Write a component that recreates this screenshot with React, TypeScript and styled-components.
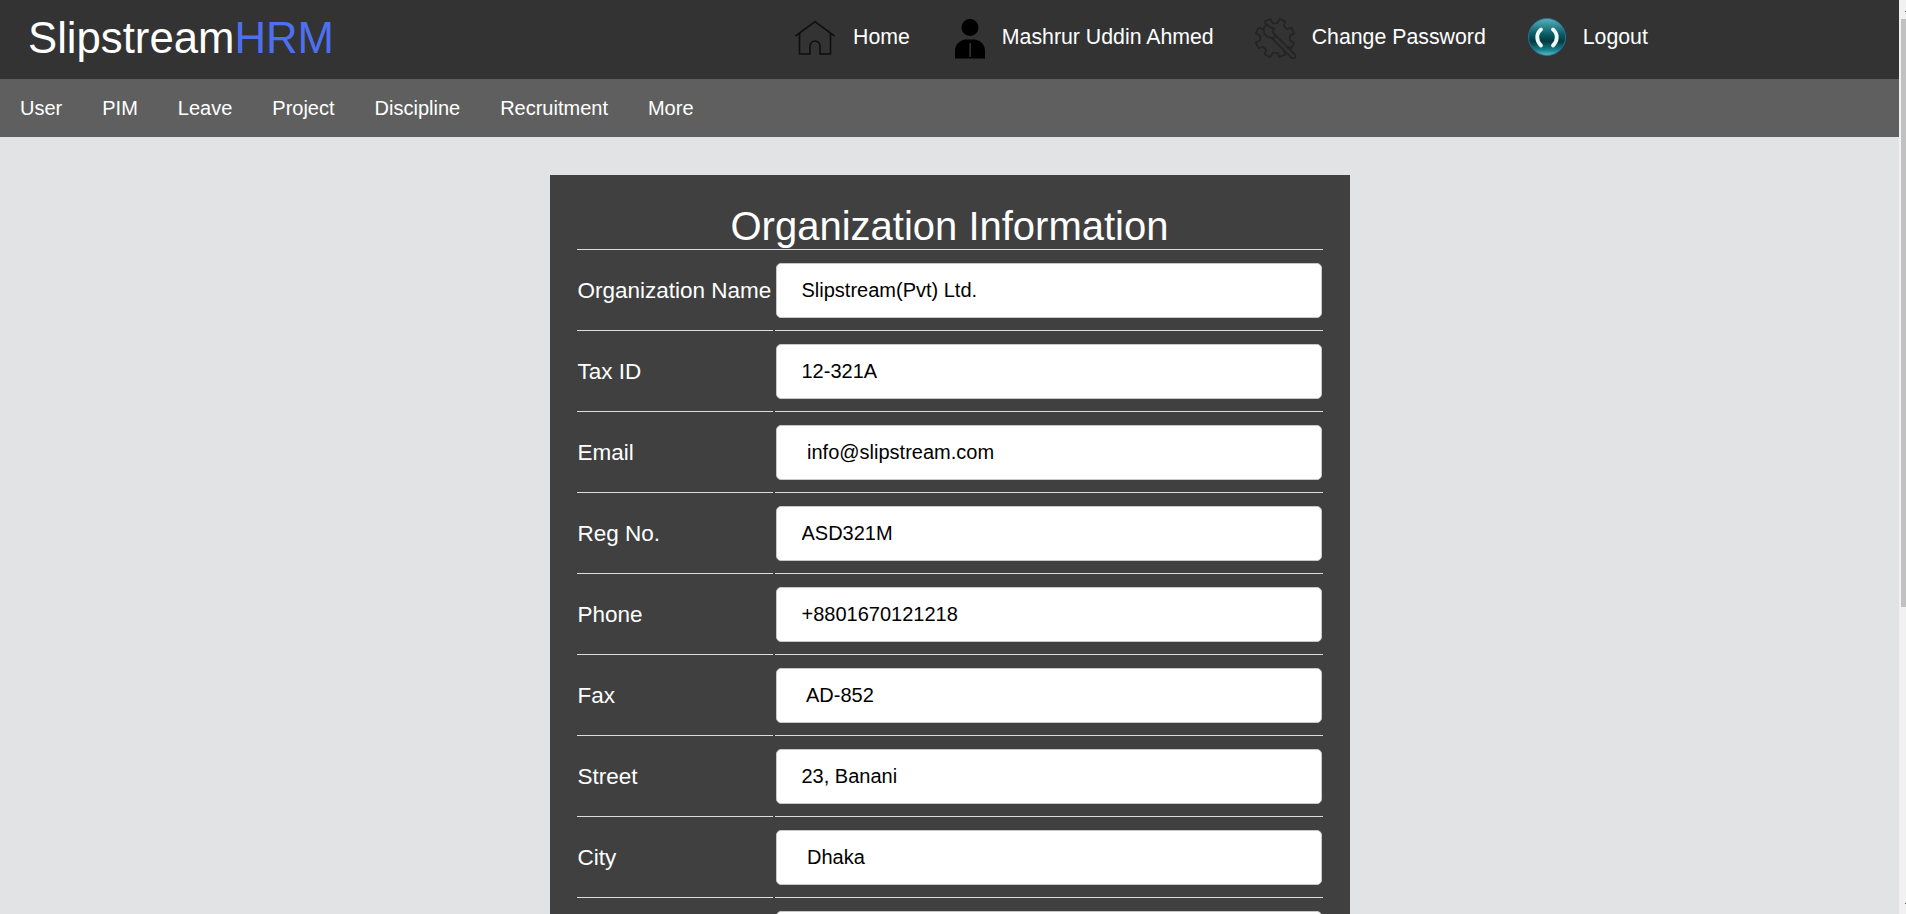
import React from "react";
import styled, { createGlobalStyle } from "styled-components";

const GlobalStyle = createGlobalStyle`
  html, body {
    margin: 0;
    padding: 0;
    height: 100%;
    overflow: hidden;
    background: #e2e3e5;
    font-family: "Liberation Sans", Arial, sans-serif;
  }
`;

const Shell = styled.div`
  display: flex;
  height: 100vh;
`;

const Page = styled.div`
  flex: 1;
  min-width: 0;
  overflow: hidden;
`;

const ScrollRail = styled.div`
  flex: none;
  width: 7px;
  padding: 19px 0 0 2px;
  box-sizing: border-box;
  background-color: #f1f1f1;
  background-image: linear-gradient(#505050, #505050), linear-gradient(#505050, #505050);
  background-repeat: no-repeat;
  background-size: 1px 1px;
  background-position: 6px 11px, 6px 903px;
`;

const ScrollThumb = styled.div`
  height: 588px;
  background: #c1c1c1;
`;

const TopBar = styled.header`
  display: flex;
  align-items: center;
  height: 79px;
  padding-bottom: 5px;
  box-sizing: border-box;
  background: #333333;
  color: #fff;
`;

const Brand = styled.div`
  width: 795px;
  padding: 2px 0 0 28px;
  box-sizing: border-box;
  font-size: 43.7px;
`;

const BrandAccent = styled.span`
  color: #4d70f0;
`;

const TopLinks = styled.nav`
  display: flex;
  align-items: center;
  gap: 37px;
`;

const TopLink = styled.a`
  display: flex;
  align-items: center;
  gap: 16px;
  font-size: 21.3px;
  color: #fff;
`;

const MenuBar = styled.nav`
  display: flex;
  height: 58px;
  background: #5f5f5f;
`;

const MenuItem = styled.a`
  display: flex;
  align-items: center;
  padding: 0 20px;
  font-size: 20px;
  color: #fff;
`;

const Card = styled.form`
  width: 800px;
  margin: 38px auto;
  padding: 28px 27px 0;
  box-sizing: border-box;
  background: #404040;
  color: #fff;
`;

const Title = styled.h1`
  margin: 0;
  height: 46px;
  border-bottom: 1px solid #ddd;
  font-size: 40px;
  font-weight: normal;
  line-height: 46px;
  text-align: center;
`;

const Row = styled.div`
  display: grid;
  grid-template-columns: 196px 548px;
  column-gap: 2px;
`;

const Label = styled.label`
  display: flex;
  align-items: center;
  padding: 2px 0 0 1px;
  border-bottom: 1px solid #ddd;
  font-size: 22.5px;
`;

const Field = styled.div`
  padding: 13px 1px 12px;
  border-bottom: 1px solid #ddd;
`;

const Input = styled.input`
  display: block;
  width: 100%;
  height: 55px;
  padding: 0 25px;
  box-sizing: border-box;
  border: 1px solid #c8c8c8;
  border-radius: 5px;
  background: #fff;
  color: #000;
  font-family: "Liberation Sans", Arial, sans-serif;
  font-size: 20px;
  outline: none;
`;

const Actions = styled.div`
  display: flex;
  justify-content: center;
  align-items: center;
  height: 101px;
`;

const SaveButton = styled.button`
  width: 200px;
  height: 54px;
  border: none;
  border-radius: 5px;
  background: #4d70f0;
  color: #fff;
  font-family: "Liberation Sans", Arial, sans-serif;
  font-size: 20px;
`;

const HomeIcon = () => (
  <svg width="42" height="38" viewBox="0 -2 42 38" fill="none" stroke="#0e0e0e" strokeWidth="1.6">
    <path d="M0.5 16L20 1.7L39.5 16" />
    <path d="M4.5 13V34H15V26a5 5 0 0 1 10 0V34H35.5V13" strokeLinejoin="round" />
  </svg>
);

const PersonIcon = () => (
  <svg width="39" height="44" viewBox="0 -4 39 44">
    <circle cx="23" cy="8.5" r="8.5" fill="#000" />
    <path d="M8 39.5V32C8 25 13 21.5 18 20.5H28C33 21.5 38 25 38 32V39.5Z" fill="#000" />
    <rect x="22.3" y="24" width="1.6" height="14" fill="#333" />
  </svg>
);

// gear outline: flat-topped teeth, open where the wrench handle crosses it
const gearPath = (cx: number, cy: number, inner: number, outer: number, teeth: number): string => {
  const step = (Math.PI * 2) / teeth;
  const parts: string[] = [];
  for (let i = 0; i < teeth; i++) {
    const a = i * step + Math.PI / 8;
    const pts: [number, number][] = [
      [inner, a - step * 0.3],
      [outer, a - step * 0.2],
      [outer, a + step * 0.2],
      [inner, a + step * 0.3],
    ];
    pts.forEach(([r, t], j) => {
      const x = (cx + r * Math.cos(t)).toFixed(1);
      const y = (cy + r * Math.sin(t)).toFixed(1);
      parts.push(`${i === 0 && j === 0 ? "M" : "L"}${x} ${y}`);
    });
  }
  return parts.join(" ") + "Z";
};

const GearIcon = () => (
  <svg width="45" height="44" viewBox="1 0 45 44" fill="none" strokeLinejoin="round">
    <path d={gearPath(25, 23, 15, 19.5, 8)} stroke="#242424" strokeWidth="1.8" />
    <path d="M21 19L43 41" stroke="#242424" strokeWidth="6.5" strokeLinecap="round" />
    <path d="M21 19L43 41" stroke="#333" strokeWidth="3" strokeLinecap="round" />
    <path d="M17 9.5C13.5 11 13 16 15 19.5C18 23 23 24 26 21.5L22.5 17L24 13.5L20 12Z" fill="#333" stroke="#242424" strokeWidth="1.8" />
  </svg>
);

const LogoutIcon = () => (
  <svg width="44" height="38" viewBox="0 -2 44 38">
    <defs>
      <linearGradient id="orb" x1="0" y1="0" x2="0" y2="1">
        <stop offset="0" stopColor="#58b4bd" />
        <stop offset="0.4" stopColor="#0d6069" />
        <stop offset="0.62" stopColor="#033a40" />
        <stop offset="0.85" stopColor="#18808c" />
        <stop offset="1" stopColor="#5cc0c8" />
      </linearGradient>
    </defs>
    <circle cx="24" cy="17" r="18.5" fill="url(#orb)" stroke="#2b6f9a" strokeWidth="1" />
    <path d="M18 9.5C13 13.5 13 21 18 25.5M30 9.5C35 13.5 35 21 30 25.5" fill="none" stroke="#eefcfc" strokeWidth="3.8" strokeLinecap="round" />
  </svg>
);

const menuItems = ["User", "PIM", "Leave", "Project", "Discipline", "Recruitment", "More"];

const fields = [
  { label: "Organization Name", value: "Slipstream(Pvt) Ltd." },
  { label: "Tax ID", value: "12-321A" },
  { label: "Email", value: " info@slipstream.com" },
  { label: "Reg No.", value: "ASD321M" },
  { label: "Phone", value: "+8801670121218" },
  { label: "Fax", value: " AD-852" },
  { label: "Street", value: "23, Banani" },
  { label: "City", value: " Dhaka" },
  { label: "State", value: "" },
  { label: "Zip", value: "" },
  { label: "Country", value: "" },
  { label: "Note", value: "" },
];

const App = (): JSX.Element => {
  return (
    <Shell>
      <GlobalStyle />
      <Page>
        <TopBar>
          <Brand>
            Slipstream<BrandAccent>HRM</BrandAccent>
          </Brand>
          <TopLinks>
            <TopLink>
              <HomeIcon />
              Home
            </TopLink>
            <TopLink>
              <PersonIcon />
              Mashrur Uddin Ahmed
            </TopLink>
            <TopLink>
              <GearIcon />
              Change Password
            </TopLink>
            <TopLink>
              <LogoutIcon />
              Logout
            </TopLink>
          </TopLinks>
        </TopBar>
        <MenuBar>
          {menuItems.map((item) => (
            <MenuItem key={item}>{item}</MenuItem>
          ))}
        </MenuBar>
        <Card>
          <Title>Organization Information</Title>
          {fields.map((field) => (
            <Row key={field.label}>
              <Label>{field.label}</Label>
              <Field>
                <Input defaultValue={field.value} />
              </Field>
            </Row>
          ))}
          <Actions>
            <SaveButton type="button">Save</SaveButton>
          </Actions>
        </Card>
      </Page>
      <ScrollRail>
        <ScrollThumb />
      </ScrollRail>
    </Shell>
  );
};

export default App;
